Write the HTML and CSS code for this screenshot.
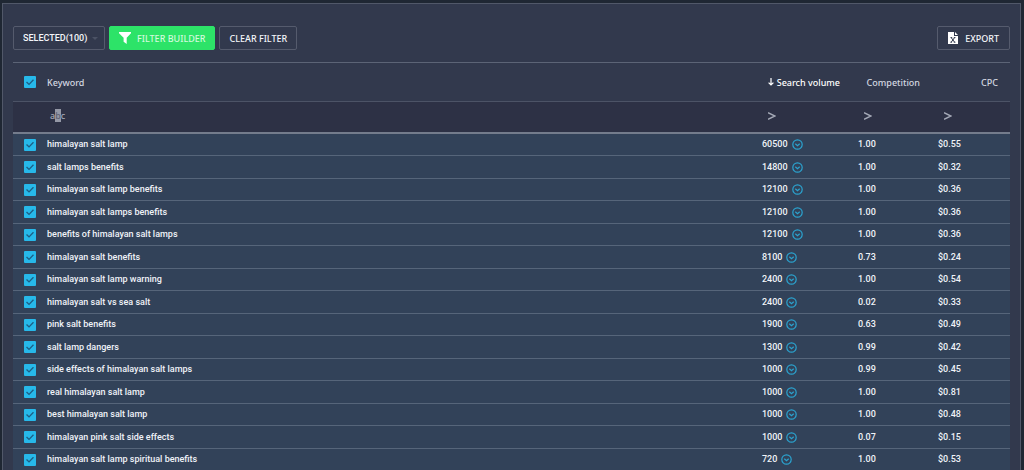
FILE: index.html
```html
<!DOCTYPE html>
<html lang="en">
<head>
<meta charset="UTF-8">
<meta name="viewport" content="width=device-width, initial-scale=1.0">
<title>Keywords</title>
<link rel="stylesheet" href="styles.css">
</head>
<body>
<svg class="sprite" aria-hidden="true">
    <symbol id="more" viewBox="0 0 11 11">
        <circle cx="5.5" cy="5.5" r="4.7" fill="none" stroke="currentColor" stroke-width="1.2"/>
        <path d="M3.3 4.7l2.2 2 2.2-2" fill="none" stroke="currentColor" stroke-width="1.2"/>
    </symbol>
</svg>
<main class="panel">
    <div class="toolbar">
        <div class="select-box">
            <select class="btn select" aria-label="Selected keywords">
                <option>SELECTED(100)</option>
            </select>
        </div>
        <button type="button" class="btn primary">
            <svg class="funnel" viewBox="0 0 12 12"><path d="M0 0h12v1.2L7.7 5.8V12L4.6 9.8v-4L0 1.2z" fill="#fff"/></svg>
            FILTER BUILDER
        </button>
        <button type="button" class="btn">CLEAR FILTER</button>
        <button type="button" class="btn export">
            <svg class="file" viewBox="0 0 10 12"><path d="M0 0h6v4h4v8H0zM7 0l3 3H7z" fill="#fff"/><path d="M3.2 5.6l3.4 4.6M6.6 5.6L3.2 10.2M2.6 5.6h1.6M5.8 5.6h1.6M2.4 10.2H4M5.8 10.2h1.6" fill="none" stroke="#32394d"/></svg>
            EXPORT
        </button>
    </div>
    <table class="grid">
        <colgroup>
            <col class="col-check">
            <col>
            <col class="col-volume">
            <col class="col-comp">
            <col class="col-cpc">
        </colgroup>
        <thead>
            <tr class="titles">
                <th class="check"><input type="checkbox" aria-label="Select all" checked></th>
                <th>Keyword</th>
                <th class="num sorted"><svg class="arrow" viewBox="0 0 6 8"><path d="M3 0v7M.6 4.6L3 7l2.4-2.4" fill="none" stroke="currentColor" stroke-width="1.2"/></svg>Search volume</th>
                <th class="num">Competition</th>
                <th class="num last">CPC</th>
            </tr>
            <tr class="filters">
                <td></td>
                <td><button type="button" class="op abc" aria-label="Contains">a<span>b</span>c</button></td>
                <td class="val"><button type="button" class="op" aria-label="Search volume greater than"><svg class="gt" viewBox="0 0 8 8"><path d="M0 .8L7 4 0 7.2" fill="none" stroke="currentColor" stroke-width="1.5"/></svg></button></td>
                <td class="val"><button type="button" class="op" aria-label="Competition greater than"><svg class="gt" viewBox="0 0 8 8"><path d="M0 .8L7 4 0 7.2" fill="none" stroke="currentColor" stroke-width="1.5"/></svg></button></td>
                <td class="val"><button type="button" class="op" aria-label="CPC greater than"><svg class="gt" viewBox="0 0 8 8"><path d="M0 .8L7 4 0 7.2" fill="none" stroke="currentColor" stroke-width="1.5"/></svg></button></td>
            </tr>
        </thead>
        <tbody>
            <tr><td class="check"><input type="checkbox" id="k1" checked></td><td><label for="k1">himalayan salt lamp</label></td><td class="val">60500<svg class="more"><use href="#more"/></svg></td><td class="val">1.00</td><td class="val">$0.55</td></tr>
            <tr><td class="check"><input type="checkbox" id="k2" checked></td><td><label for="k2">salt lamps benefits</label></td><td class="val">14800<svg class="more"><use href="#more"/></svg></td><td class="val">1.00</td><td class="val">$0.32</td></tr>
            <tr><td class="check"><input type="checkbox" id="k3" checked></td><td><label for="k3">himalayan salt lamp benefits</label></td><td class="val">12100<svg class="more"><use href="#more"/></svg></td><td class="val">1.00</td><td class="val">$0.36</td></tr>
            <tr><td class="check"><input type="checkbox" id="k4" checked></td><td><label for="k4">himalayan salt lamps benefits</label></td><td class="val">12100<svg class="more"><use href="#more"/></svg></td><td class="val">1.00</td><td class="val">$0.36</td></tr>
            <tr><td class="check"><input type="checkbox" id="k5" checked></td><td><label for="k5">benefits of himalayan salt lamps</label></td><td class="val">12100<svg class="more"><use href="#more"/></svg></td><td class="val">1.00</td><td class="val">$0.36</td></tr>
            <tr><td class="check"><input type="checkbox" id="k6" checked></td><td><label for="k6">himalayan salt benefits</label></td><td class="val">8100<svg class="more"><use href="#more"/></svg></td><td class="val">0.73</td><td class="val">$0.24</td></tr>
            <tr><td class="check"><input type="checkbox" id="k7" checked></td><td><label for="k7">himalayan salt lamp warning</label></td><td class="val">2400<svg class="more"><use href="#more"/></svg></td><td class="val">1.00</td><td class="val">$0.54</td></tr>
            <tr><td class="check"><input type="checkbox" id="k8" checked></td><td><label for="k8">himalayan salt vs sea salt</label></td><td class="val">2400<svg class="more"><use href="#more"/></svg></td><td class="val">0.02</td><td class="val">$0.33</td></tr>
            <tr><td class="check"><input type="checkbox" id="k9" checked></td><td><label for="k9">pink salt benefits</label></td><td class="val">1900<svg class="more"><use href="#more"/></svg></td><td class="val">0.63</td><td class="val">$0.49</td></tr>
            <tr><td class="check"><input type="checkbox" id="k10" checked></td><td><label for="k10">salt lamp dangers</label></td><td class="val">1300<svg class="more"><use href="#more"/></svg></td><td class="val">0.99</td><td class="val">$0.42</td></tr>
            <tr><td class="check"><input type="checkbox" id="k11" checked></td><td><label for="k11">side effects of himalayan salt lamps</label></td><td class="val">1000<svg class="more"><use href="#more"/></svg></td><td class="val">0.99</td><td class="val">$0.45</td></tr>
            <tr><td class="check"><input type="checkbox" id="k12" checked></td><td><label for="k12">real himalayan salt lamp</label></td><td class="val">1000<svg class="more"><use href="#more"/></svg></td><td class="val">1.00</td><td class="val">$0.81</td></tr>
            <tr><td class="check"><input type="checkbox" id="k13" checked></td><td><label for="k13">best himalayan salt lamp</label></td><td class="val">1000<svg class="more"><use href="#more"/></svg></td><td class="val">1.00</td><td class="val">$0.48</td></tr>
            <tr><td class="check"><input type="checkbox" id="k14" checked></td><td><label for="k14">himalayan pink salt side effects</label></td><td class="val">1000<svg class="more"><use href="#more"/></svg></td><td class="val">0.07</td><td class="val">$0.15</td></tr>
            <tr><td class="check"><input type="checkbox" id="k15" checked></td><td><label for="k15">himalayan salt lamp spiritual benefits</label></td><td class="val">720<svg class="more"><use href="#more"/></svg></td><td class="val">1.00</td><td class="val">$0.53</td></tr>
        </tbody>
    </table>
</main>
</body>
</html>
```
FILE: styles.css
```css
* {
    box-sizing: border-box;
}
body {
    margin: 0;
    padding: 3px 3px 0 2px;
    background: #1f2733;
    color: #f0f3f8;
    font-family: "Noto Sans", "Open Sans", sans-serif;
    font-size: 9px;
    font-weight: 500;
}
.sprite {
    display: none;
}
.panel {
    padding: 22px 10px 0;
    background: #32394d;
    border: 1px solid #515869;
    border-bottom: 0;
}
.toolbar {
    display: flex;
    gap: 4px;
    padding-bottom: 12px;
}
.btn {
    display: flex;
    align-items: center;
    height: 24px;
    padding: 0 9px;
    background: transparent;
    border: 1px solid #555b6d;
    border-radius: 2px;
    color: #f4f6fa;
    font-family: inherit;
    font-size: 9px;
    font-weight: 500;
    cursor: pointer;
}
.select-box {
    position: relative;
}
.select-box::after {
    content: "";
    position: absolute;
    top: 11px;
    right: 7px;
    border: 3px solid transparent;
    border-top-color: #4b5265;
    border-bottom: 0;
}
.select {
    width: 92px;
    font-family: Roboto, sans-serif;
    appearance: none;
}
.primary {
    gap: 6px;
    background: #2de368;
    border-color: #2de368;
    color: #d3fadd;
}
.export {
    gap: 7px;
    padding: 0 10px;
    margin-left: auto;
}
.funnel {
    width: 12px;
    height: 12px;
}
.file {
    width: 10px;
    height: 12px;
}
.grid {
    width: 100%;
    table-layout: fixed;
    border-collapse: separate;
    border-spacing: 0;
}
.col-check {
    width: 34px;
}
.col-volume {
    width: 96px;
}
.col-comp {
    width: 80px;
}
.col-cpc {
    width: 84px;
}
th,
td {
    padding: 0;
    text-align: left;
    vertical-align: middle;
    white-space: nowrap;
}
.titles th {
    height: 40px;
    border-top: 1px solid #5c6476;
    border-bottom: 1px solid #4c5366;
    color: #d3d7e0;
    font-weight: 500;
}
.titles .num {
    padding-right: 6px;
    text-align: right;
}
.titles .last {
    padding-right: 12px;
}
.titles .sorted {
    color: #fff;
}
.arrow {
    width: 6px;
    height: 8px;
    margin-right: 3px;
}
.filters td {
    height: 32px;
    padding-bottom: 2px;
    background: #2d3145;
    border-bottom: 2px solid #747c8c;
}
.op {
    display: block;
    padding: 0 6px;
    background: none;
    border: 0;
    color: #a4a9b6;
    cursor: pointer;
}
.abc {
    padding: 0 3px;
    font-family: inherit;
    font-size: 9px;
    font-weight: 500;
    line-height: 12px;
}
.abc span {
    background: #9498a6;
    color: #5d6274;
}
.gt {
    display: block;
    width: 8px;
    height: 8px;
}
tbody td {
    height: 22px;
    background: #324259;
    border-bottom: 1px solid #56657a;
    font-family: Roboto, sans-serif;
    line-height: 11px;
}
tbody tr:nth-child(even) td {
    height: 23px;
}
.val,
.filters .val {
    padding-left: 12px;
}
.check {
    padding-left: 11px;
}
input[type="checkbox"] {
    display: block;
    width: 12px;
    height: 12px;
    margin: 0;
    appearance: none;
    background: #455066;
    border-radius: 1px;
}
input[type="checkbox"]:checked {
    background: #27b9ea;
}
input[type="checkbox"]:checked::before {
    content: "";
    display: block;
    width: 12px;
    height: 12px;
    background: #1c5f85;
    clip-path: polygon(17% 54%, 25% 46%, 42% 62%, 75% 28%, 83% 36%, 42% 78%);
}
.more {
    width: 11px;
    height: 11px;
    margin-left: 4px;
    color: #2ba3cf;
    vertical-align: bottom;
}
```
